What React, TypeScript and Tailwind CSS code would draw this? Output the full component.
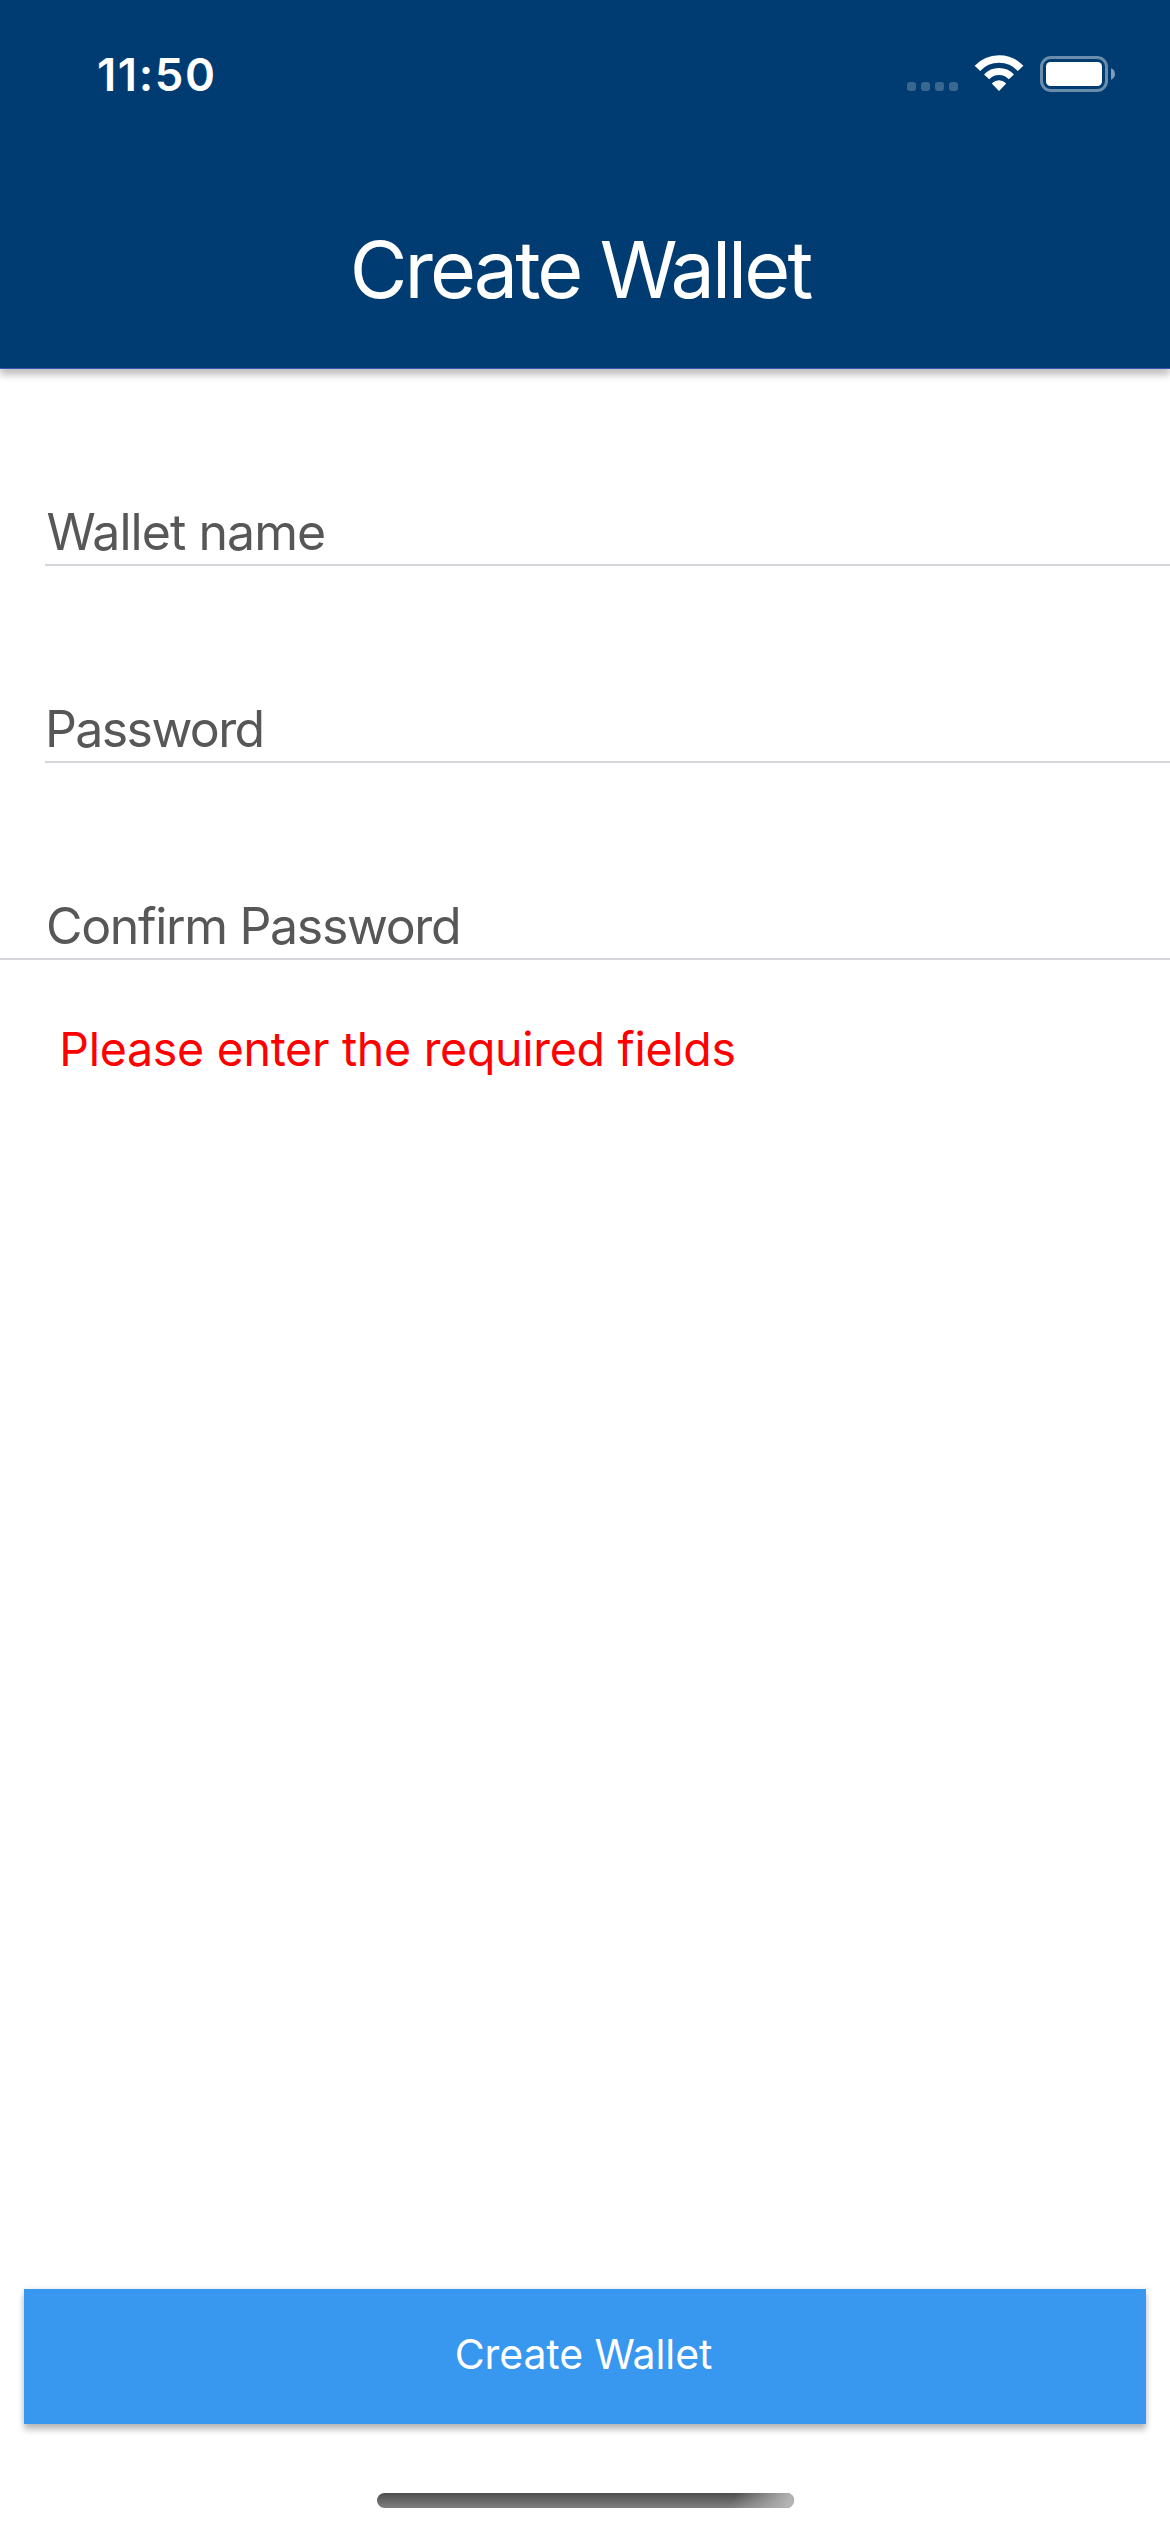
import React from "react";

function StatusIcons() {
  return (
    <svg width="210" height="40" viewBox="905 54 210 40" fill="#fff">
      <g opacity=".22">
        <rect x="907" y="82" width="9" height="9" rx="3" />
        <rect x="921" y="82" width="9" height="9" rx="3" />
        <rect x="935" y="82" width="9" height="9" rx="3" />
        <rect x="949" y="82" width="9" height="9" rx="3" />
      </g>
      <g fill="none" stroke="#fff">
        <path d="M977.4 68.4A29.500 29.500 0 0 1 1020.600 68.4" strokeWidth="7.500" />
        <path d="M986.6 76.900A17 17 0 0 1 1011.400 76.900" strokeWidth="7" />
      </g>
      <path
        d="M992.800 83.600Q995.500 81 999 81T1005.200 83.600L999 90Z"
        stroke="#fff"
        strokeWidth="1.500"
        strokeLinejoin="round"
      />
      <rect x="1041.500" y="57.500" width="65" height="33" rx="9.500" fill="none" stroke="#fff" strokeOpacity=".42" strokeWidth="3" />
      <rect x="1046" y="62" width="56" height="24" rx="4.500" />
      <path d="M1111 68.300c5.300 2 5.300 9.400 0 11.400z" opacity=".5" />
    </svg>
  );
}

type FieldProps = { label: string; labelClass: string; lineClass: string };

function Field({ label, labelClass, lineClass }: FieldProps) {
  return (
    <div className="flex h-[197px] flex-col justify-end">
      <label className={`mb-[2px] text-[50px] leading-[60px] text-[#575757] ${labelClass}`}>{label}</label>
      <div className={`h-[2px] bg-[#d5d5da] ${lineClass}`} />
    </div>
  );
}

export default function App() {
  return (
    <div className="flex h-[2532px] w-[1170px] flex-col overflow-hidden bg-white font-['Inter',sans-serif]">
      <header className="h-[369px] shrink-0 border-b border-[#3f51b5] bg-[#003c71] text-white shadow-[0_6px_7px_rgba(0,0,0,0.25)]">
        <div className="flex h-[148px] items-start justify-between pr-[55px] pl-[97px]">
          <span className="mt-[52.5px] text-[45.5px] leading-[44px] font-semibold tracking-[1.6px]">11:50</span>
          <div className="mt-[54px]">
            <StatusIcons />
          </div>
        </div>
        <h1 className="pr-[10px] text-center text-[79px] leading-[243px] tracking-[-2.96px]">Create Wallet</h1>
      </header>

      <form className="flex flex-col">
        <Field label="Wallet name" labelClass="pl-[46.5px] tracking-[-0.95px]" lineClass="ml-[45px]" />
        <Field label="Password" labelClass="pl-[45px] tracking-[-1.6px]" lineClass="ml-[45px]" />
        <Field label="Confirm Password" labelClass="pl-[46px] tracking-[-1.33px]" lineClass="" />
      </form>

      <p className="mt-[59px] pl-[59.3px] text-[46.5px] leading-[60px] tracking-[-0.29px] text-[#ff0000]">
        Please enter the required fields
      </p>

      <footer className="mt-auto flex flex-col items-center pb-[24px]">
        <button
          type="button"
          className="h-[135px] w-[1122px] bg-[#3897ee] pr-[3px] pb-[3px] text-center text-[41px] tracking-[-0.12px] text-white shadow-[0_6px_6px_rgba(0,0,0,0.24),0_0_6px_rgba(0,0,0,0.1)]"
        >
          Create Wallet
        </button>
        <div className="mt-[69px] h-[15px] w-[417px] overflow-hidden rounded-full bg-linear-to-b from-[#4e4e4e] to-[#808080]">
          <div className="ml-auto h-full w-[80px] bg-linear-[110deg,transparent_25%,#b4b4b4_92%]" />
        </div>
      </footer>
    </div>
  );
}
